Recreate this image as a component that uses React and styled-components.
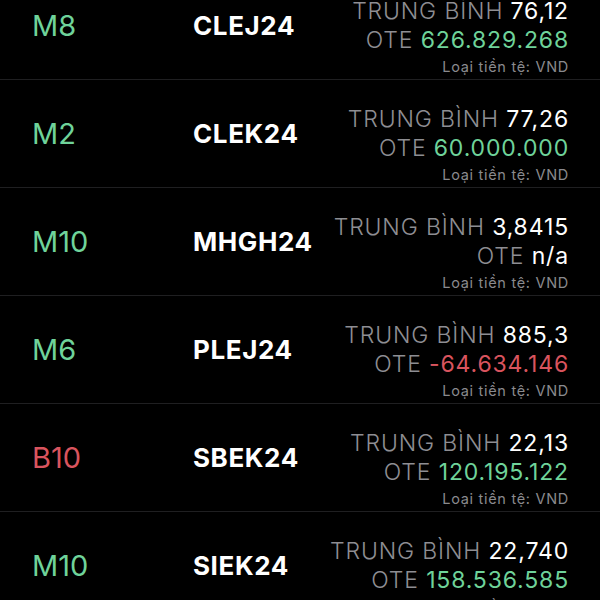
import React from 'react';
import styled, { createGlobalStyle } from 'styled-components';

const GlobalStyle = createGlobalStyle`
  html, body {
    margin: 0;
    padding: 0;
    background: #000;
    overflow: hidden;
  }
  body {
    font-family: Inter, "Noto Sans", sans-serif;
    -webkit-font-smoothing: antialiased;
  }
`;

const List = styled.ul`
  list-style: none;
  margin: -28px 0 0;
  padding: 0;
  background: #000;
`;

const Row = styled.li`
  display: grid;
  grid-template-columns: 161px 1fr auto;
  align-items: center;
  height: 107px;
  padding: 0 31px 0 32px;
  border-bottom: 1px solid #1f1f21;
`;

const Side = styled.span`
  font-size: 29px;
  font-weight: 400;
  color: ${props => (props.sell ? '#d9545e' : '#6fd39a')};
`;

const Ticker = styled.span`
  font-size: 26px;
  font-weight: 700;
  color: #fff;
  letter-spacing: 0.6px;
`;

const Stats = styled.div`
  align-self: stretch;
  display: flex;
  flex-direction: column;
  align-items: flex-end;
  padding-top: 25px;
`;

const Line = styled.div`
  font-size: 23px;
  font-weight: 300;
  line-height: 29px;
  letter-spacing: 0.85px;
  color: #8e8e93;
  white-space: nowrap;
`;

const Value = styled.span`
  font-weight: 400;
  color: ${props =>
    props.tone === 'up' ? '#6fd39a' : props.tone === 'down' ? '#d9545e' : '#fff'};
`;

const Currency = styled.div`
  font-size: 14.5px;
  line-height: 23px;
  letter-spacing: 0.7px;
  color: #8a8a8e;
  white-space: nowrap;
`;

const rows = [
  { side: 'M8', ticker: 'CLEJ24', avg: '76,12', ote: '626.829.268', tone: 'up' },
  { side: 'M2', ticker: 'CLEK24', avg: '77,26', ote: '60.000.000', tone: 'up' },
  { side: 'M10', ticker: 'MHGH24', avg: '3,8415', ote: 'n/a', tone: 'none' },
  { side: 'M6', ticker: 'PLEJ24', avg: '885,3', ote: '-64.634.146', tone: 'down' },
  { side: 'B10', ticker: 'SBEK24', avg: '22,13', ote: '120.195.122', tone: 'up' },
  { side: 'M10', ticker: 'SIEK24', avg: '22,740', ote: '158.536.585', tone: 'up' },
];

export default function App() {
  return (
    <>
      <GlobalStyle />
      <List>
        {rows.map((r, i) => (
          <Row key={i}>
            <Side sell={r.side.startsWith('B')}>{r.side}</Side>
            <Ticker>{r.ticker}</Ticker>
            <Stats>
              <Line>
                TRUNG BÌNH <Value>{r.avg}</Value>
              </Line>
              <Line>
                OTE <Value tone={r.tone}>{r.ote}</Value>
              </Line>
              <Currency>Loại tiền tệ: VND</Currency>
            </Stats>
          </Row>
        ))}
      </List>
    </>
  );
}
